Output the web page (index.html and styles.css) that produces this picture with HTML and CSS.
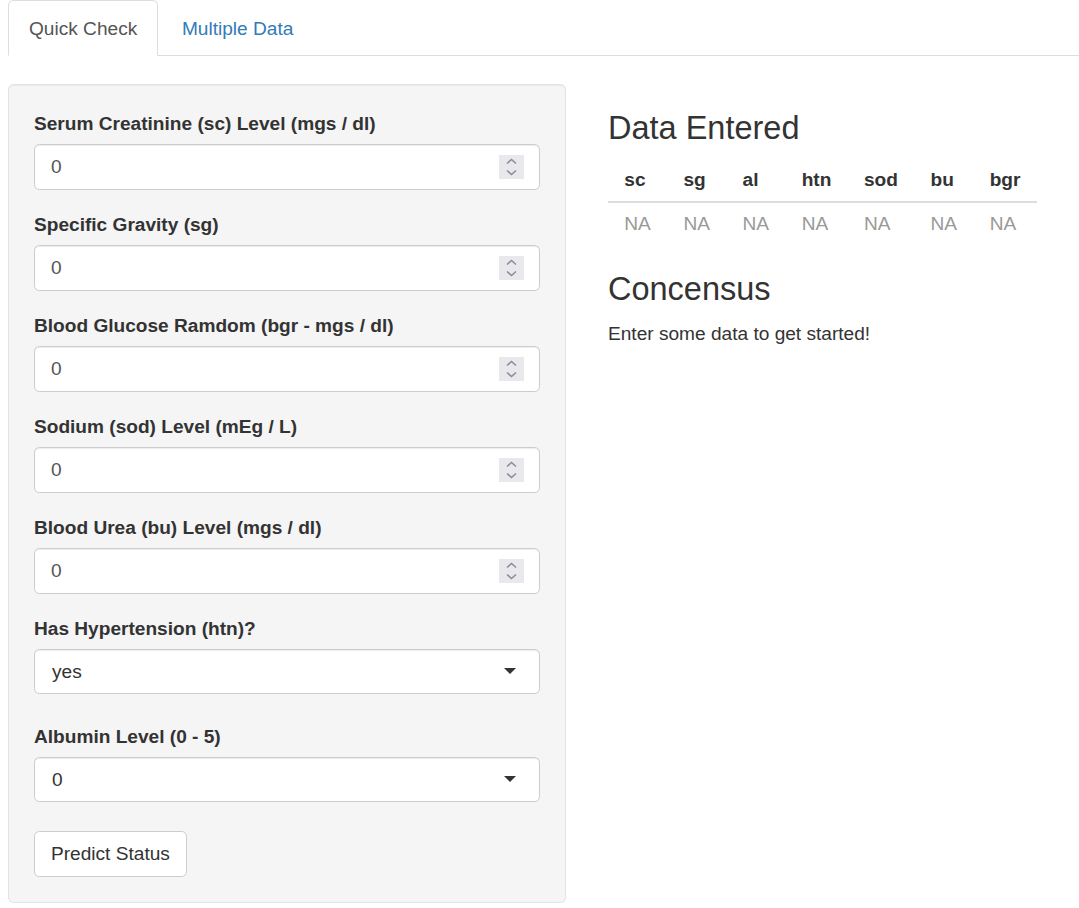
FILE: index.html
```html
<!DOCTYPE html>
<html>
<head>
<meta charset="utf-8">
<link rel="stylesheet" href="styles.css">
</head>
<body>
<div class="page">
  <ul class="tabs">
    <li class="tab active"><a>Quick Check</a></li>
    <li class="tab"><a>Multiple Data</a></li>
  </ul>
  <div class="layout">
    <form class="well">
      <div class="group">
        <label class="lbl">Serum Creatinine (sc) Level (mgs / dl)</label>
        <div class="num"><input class="field" type="number" value="0"><span class="spin"><svg width="25" height="24" viewBox="0 0 25 24"><path d="M8 8.5 L12.5 4.5 L17 8.5" fill="none" stroke="#8d8c97" stroke-width="1.6"/><path d="M8 15.5 L12.5 19.5 L17 15.5" fill="none" stroke="#8d8c97" stroke-width="1.6"/></svg></span></div>
      </div>
      <div class="group">
        <label class="lbl">Specific Gravity (sg)</label>
        <div class="num"><input class="field" type="number" value="0"><span class="spin"><svg width="25" height="24" viewBox="0 0 25 24"><path d="M8 8.5 L12.5 4.5 L17 8.5" fill="none" stroke="#8d8c97" stroke-width="1.6"/><path d="M8 15.5 L12.5 19.5 L17 15.5" fill="none" stroke="#8d8c97" stroke-width="1.6"/></svg></span></div>
      </div>
      <div class="group">
        <label class="lbl">Blood Glucose Ramdom (bgr - mgs / dl)</label>
        <div class="num"><input class="field" type="number" value="0"><span class="spin"><svg width="25" height="24" viewBox="0 0 25 24"><path d="M8 8.5 L12.5 4.5 L17 8.5" fill="none" stroke="#8d8c97" stroke-width="1.6"/><path d="M8 15.5 L12.5 19.5 L17 15.5" fill="none" stroke="#8d8c97" stroke-width="1.6"/></svg></span></div>
      </div>
      <div class="group">
        <label class="lbl">Sodium (sod) Level (mEg / L)</label>
        <div class="num"><input class="field" type="number" value="0"><span class="spin"><svg width="25" height="24" viewBox="0 0 25 24"><path d="M8 8.5 L12.5 4.5 L17 8.5" fill="none" stroke="#8d8c97" stroke-width="1.6"/><path d="M8 15.5 L12.5 19.5 L17 15.5" fill="none" stroke="#8d8c97" stroke-width="1.6"/></svg></span></div>
      </div>
      <div class="group">
        <label class="lbl">Blood Urea (bu) Level (mgs / dl)</label>
        <div class="num"><input class="field" type="number" value="0"><span class="spin"><svg width="25" height="24" viewBox="0 0 25 24"><path d="M8 8.5 L12.5 4.5 L17 8.5" fill="none" stroke="#8d8c97" stroke-width="1.6"/><path d="M8 15.5 L12.5 19.5 L17 15.5" fill="none" stroke="#8d8c97" stroke-width="1.6"/></svg></span></div>
      </div>
      <div class="group sel-group">
        <label class="lbl">Has Hypertension (htn)?</label>
        <div class="select"><span>yes</span><span class="caret"></span></div>
      </div>
      <div class="group sel-group">
        <label class="lbl">Albumin Level (0 - 5)</label>
        <div class="select"><span>0</span><span class="caret"></span></div>
      </div>
      <button type="button" class="btn">Predict Status</button>
    </form>
    <main class="main">
      <h3 class="heading">Data Entered</h3>
      <table class="data">
        <thead>
          <tr><th>sc</th><th>sg</th><th>al</th><th>htn</th><th>sod</th><th>bu</th><th>bgr</th></tr>
        </thead>
        <tbody>
          <tr><td>NA</td><td>NA</td><td>NA</td><td>NA</td><td>NA</td><td>NA</td><td>NA</td></tr>
        </tbody>
      </table>
      <h3 class="heading">Concensus</h3>
      <p class="msg">Enter some data to get started!</p>
    </main>
  </div>
</div>
</body>
</html>
```
FILE: styles.css
```css
* { box-sizing: border-box; }
html, body { margin: 0; padding: 0; background: #fff; }
body {
  font-family: "Liberation Sans", Arial, Helvetica, sans-serif;
  font-size: 19.1px;
  line-height: 26.67px;
  color: #333;
  width: 1079px;
  height: 908px;
  overflow: hidden;
}
.page { padding-left: 8px; }

.tabs {
  list-style: none;
  margin: 0;
  padding: 0;
  display: flex;
  border-bottom: 1px solid #ddd;
  height: 56px;
}
.tab { margin-bottom: -1px; margin-right: 2.67px; }
.tab a {
  display: block;
  padding: 15px 20px 12px;
  line-height: 26.67px;
  border: 1px solid transparent;
  border-radius: 5.33px 5.33px 0 0;
  color: #337ab7;
  height: 56px;
}
.tab.active a {
  color: #555;
  background: #fff;
  border-color: #ddd #ddd transparent;
}

.layout {
  display: flex;
  gap: 42px;
  margin-top: 28px;
  align-items: flex-start;
}
.well {
  width: 558px;
  flex: none;
  margin: 0;
  background: #f5f5f5;
  border: 1px solid #e3e3e3;
  border-radius: 5.33px;
  box-shadow: inset 0 1px 1px rgba(0,0,0,.05);
  padding: 25px;
}
.group { margin-bottom: 21px; }
.sel-group { margin-bottom: 29px; }
.lbl {
  display: block;
  font-weight: bold;
  line-height: 26.67px;
  padding-top: 1px;
  margin-bottom: 6.33px;
}
.num { position: relative; }
.field {
  display: block;
  width: 100%;
  height: 46px;
  padding: 8px 16px;
  font: inherit;
  color: #555;
  background: #fff;
  border: 1px solid #ccc;
  border-radius: 5.33px;
  box-shadow: inset 0 1px 1px rgba(0,0,0,.075);
  -moz-appearance: textfield;
  outline: none;
}
.field::-webkit-inner-spin-button,
.field::-webkit-outer-spin-button { -webkit-appearance: none; margin: 0; }
.spin {
  position: absolute;
  right: 16px;
  top: 11px;
  width: 25px;
  height: 24px;
  background: #e9e9ed;
  display: block;
}
.spin svg { display: block; }
.select {
  position: relative;
  height: 45px;
  display: flex;
  align-items: center;
  padding: 1px 17px 0;
  background: #fff;
  border: 1px solid #ccc;
  border-radius: 5.33px;
  box-shadow: inset 0 1px 1px rgba(0,0,0,.075);
  color: #333;
}
.caret {
  position: absolute;
  right: 23px;
  top: 18px;
  width: 0;
  height: 0;
  border-left: 6px solid transparent;
  border-right: 6px solid transparent;
  border-top: 6px solid #333;
}
.btn {
  display: block;
  font: inherit;
  color: #333;
  background: #fff;
  border: 1px solid #ccc;
  border-radius: 5.33px;
  padding: 8px 16px;
  height: 46px;
  line-height: 26.67px;
}

.main { flex: 1; }
.heading {
  font-size: 32.5px;
  font-weight: 500;
  line-height: 35.2px;
  margin: 26.67px 0 13.33px;
}
.data {
  border-collapse: collapse;
  margin-bottom: 27px;
}
.data th {
  text-align: left;
  font-weight: bold;
  padding: 8px 16.3px 6.67px;
  border-bottom: 2px solid #ddd;
  line-height: 26.67px;
}
.data td {
  padding: 8px 16.3px;
  color: #999;
  line-height: 26.67px;
}
.msg { margin: 0; }
```
